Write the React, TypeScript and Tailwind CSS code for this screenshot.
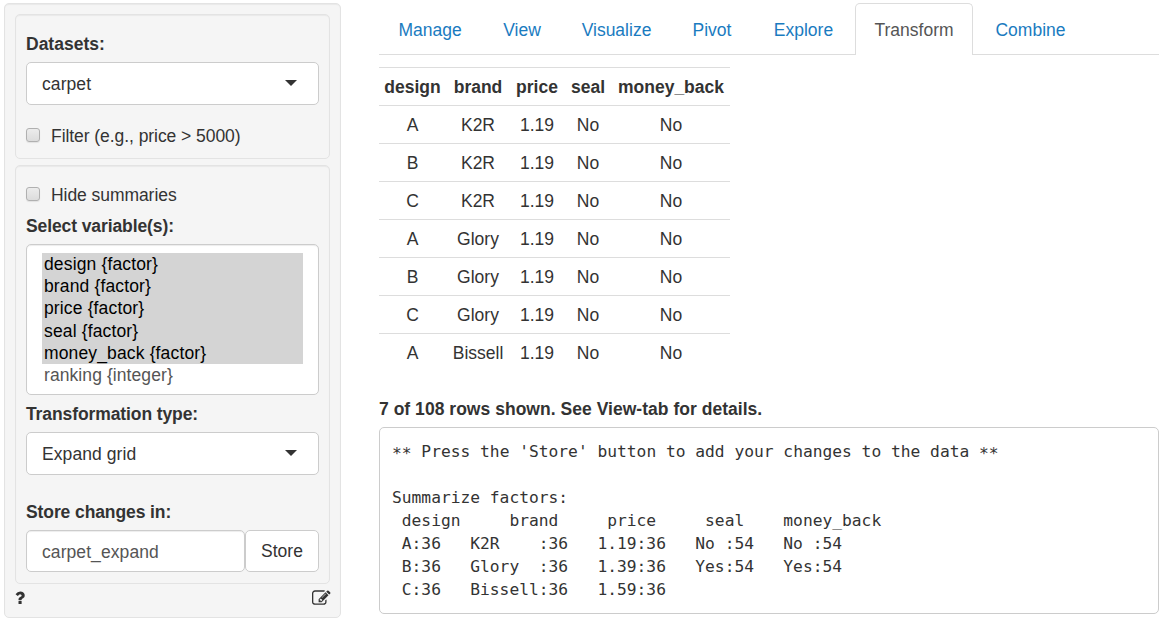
const tabs = [
  { label: 'Manage', box: 'w-[102px]' },
  { label: 'View', box: 'w-[82px]' },
  { label: 'Visualize', box: 'w-[107px]' },
  { label: 'Pivot', box: 'w-[84px]' },
  { label: 'Explore', box: 'w-[101px] pr-[2px]' },
  { label: 'Transform', box: 'w-[118px]', active: true },
  { label: 'Combine', box: 'w-[115px]' },
];

const columns = [
  { label: 'design', box: 'w-[67px]' },
  { label: 'brand', box: 'w-[64px]' },
  { label: 'price', box: 'w-[54px]' },
  { label: 'seal', box: 'w-[48px]' },
  { label: 'money_back', box: 'w-[118px]' },
];

const rows = [
  ['A', 'K2R', '1.19', 'No', 'No'],
  ['B', 'K2R', '1.19', 'No', 'No'],
  ['C', 'K2R', '1.19', 'No', 'No'],
  ['A', 'Glory', '1.19', 'No', 'No'],
  ['B', 'Glory', '1.19', 'No', 'No'],
  ['C', 'Glory', '1.19', 'No', 'No'],
  ['A', 'Bissell', '1.19', 'No', 'No'],
];

const variables = [
  'design {factor}',
  'brand {factor}',
  'price {factor}',
  'seal {factor}',
  'money_back {factor}',
];

const summary = `

Summarize factors:
 design     brand     price     seal    money_back
 A:36   K2R    :36   1.19:36   No :54   No :54
 B:36   Glory  :36   1.39:36   Yes:54   Yes:54
 C:36   Bissell:36   1.59:36                  `;

function QuestionIcon() {
  return (
    <svg viewBox="0 0 1792 1792" className="-ml-[4px] size-[17.5px]" fill="currentColor">
      <path d="M1088 1256v240q0 16-12 28t-28 12h-240q-16 0-28-12t-12-28v-240q0-16 12-28t28-12h240q16 0 28 12t12 28zm316-600q0 54-15.5 101t-35 76.5-55 59.5-57.5 43.5-61 35.5q-41 23-68.5 65t-27.5 67q0 17-12 32.5t-28 15.5h-240q-15 0-25.5-18.5t-10.5-37.5v-45q0-83 65-156.5t143-108.5q59-27 84-56t25-76q0-42-46.5-74t-107.5-32q-65 0-108 29-35 25-107 115-13 16-31 16-12 0-25-8l-164-125q-13-10-15.5-25t5.5-28q160-266 464-266 80 0 161 31t146 83 106 127.5 41 158.5z" />
    </svg>
  );
}

function EditIcon() {
  return (
    <svg viewBox="0 0 1792 1792" className="-mr-[0.5px] size-[18.5px]" fill="currentColor">
      <path d="M888 1184l116-116-152-152-116 116v56h96v96h56zm440-720q-16-16-33 1l-350 350q-17 17-1 33t33-1l350-350q17-17 1-33zm80 594v190q0 119-84.5 203.5t-203.5 84.5h-832q-119 0-203.5-84.5t-84.5-203.5v-832q0-119 84.5-203.5t203.5-84.5h832q63 0 117 25 15 7 18 23 3 17-9 29l-49 49q-14 14-32 8-23-6-45-6h-832q-66 0-113 47t-47 113v832q0 66 47 113t113 47h832q66 0 113-47t47-113v-126q0-13 9-22l64-64q15-15 35-7t20 29zm-96-738l288 288-672 672h-288v-288zm444 132l-92 92-288-288 92-92q28-28 68-28t68 28l152 152q28 28 28 68t-28 68z" />
    </svg>
  );
}

function Select({ value }: { value: string }) {
  return (
    <div className="flex h-[43px] items-center justify-between rounded-[5px] border border-[#ccc] bg-white pr-[21px] pl-[15px]">
      <span className="tracking-[0.08px]">{value}</span>
      <span className="-mt-[2px] border-x-[6px] border-t-[6px] border-x-transparent border-t-[#333]" />
    </div>
  );
}

function Check({ label }: { label: string }) {
  return (
    <div className="flex h-[24px] items-center">
      <span className="-mt-[3px] mr-[11px] size-[14px] rounded-[3px] border border-[#b0b0b0] bg-linear-to-b from-[#ececec] to-[#dcdcdc] shadow-[0_1px_1px_rgba(0,0,0,0.08)]" />
      <span className="tracking-[-0.06px]">{label}</span>
    </div>
  );
}

function Stars() {
  return <span className="inline-block translate-y-[2px]">**</span>;
}

const well = 'rounded-[5px] border border-[#e3e3e3] bg-[#f5f5f5] shadow-[inset_0_1px_1px_rgba(0,0,0,0.05)]';

export default function App() {
  return (
    <div className="flex h-[623px] w-[1165px] overflow-hidden bg-white pt-[3px] pl-[4px] font-['Liberation_Sans',Arial,sans-serif] text-[17.5px] leading-[24px] text-[#333]">
      <aside className={`h-[615px] w-[337px] shrink-0 px-[10px] pt-[10px] ${well}`}>
        <section className={`h-[145px] px-[10px] pt-[17px] ${well}`}>
          <div className="mb-[6px] h-[24px] font-bold">Datasets:</div>
          <Select value="carpet" />
          <div className="mt-[19px]">
            <Check label="Filter (e.g., price > 5000)" />
          </div>
        </section>
        <section className={`mt-[6px] h-[419px] px-[10px] pt-[17px] ${well}`}>
          <Check label="Hide summaries" />
          <div className="mt-[7px] h-[24px] font-bold tracking-[-0.1px]">Select variable(s):</div>
          <div className="mt-[6px] h-[151px] rounded-[5px] border border-[#ccc] bg-white px-[15px] pt-[8px] leading-[22.2px] shadow-[inset_0_1px_1px_rgba(0,0,0,0.075)]">
            <ul className="h-[111px] bg-[#d4d4d4] pl-[2px] tracking-[0.14px] text-black">
              {variables.map((v) => (
                <li key={v}>{v}</li>
              ))}
            </ul>
            <div className="pl-[2px] tracking-[0.08px] text-[#555]">ranking {'{integer}'}</div>
          </div>
          <div className="mt-[7px] mb-[6px] h-[24px] font-bold tracking-[-0.1px]">Transformation type:</div>
          <Select value="Expand grid" />
          <div className="mt-[25px] mb-[6px] h-[24px] font-bold tracking-[-0.1px]">Store changes in:</div>
          <div className="flex h-[42px]">
            <div className="flex w-[219px] items-center rounded-[5px] border border-[#ccc] bg-white pt-[2px] pl-[15px] tracking-[0.08px] text-[#555] shadow-[inset_0_1px_1px_rgba(0,0,0,0.075)]">
              carpet_expand
            </div>
            <button className="flex w-[74px] items-center justify-center rounded-[5px] border border-[#ccc] bg-white">
              Store
            </button>
          </div>
        </section>
        <footer className="mt-[5px] flex justify-between">
          <QuestionIcon />
          <EditIcon />
        </footer>
      </aside>
      <main className="ml-[38px] w-[780px]">
        <nav className="flex h-[52px] border-b border-[#ddd]">
          {tabs.map((t) => (
            <a
              key={t.label}
              className={
                t.active
                  ? `flex h-[52px] items-center justify-center rounded-t-[5px] border border-b-0 border-[#ddd] bg-white text-[#555] ${t.box}`
                  : `flex h-[52px] items-center justify-center pt-[2px] text-[#1a7bbf] ${t.box}`
              }
            >
              {t.label}
            </a>
          ))}
        </nav>
        <table className="mt-[12px] w-[351px] table-fixed border-separate border-spacing-0 text-center">
          <thead>
            <tr>
              {columns.map((c) => (
                <th key={c.label} className={`h-[38px] border-t border-[#ddd] p-0 font-bold ${c.box}`}>
                  {c.label}
                </th>
              ))}
            </tr>
          </thead>
          <tbody>
            {rows.map((row, i) => (
              <tr key={i}>
                {row.map((cell, j) => (
                  <td key={j} className="h-[38px] border-t border-[#ddd] p-0">
                    {cell}
                  </td>
                ))}
              </tr>
            ))}
          </tbody>
        </table>
        <p className="mt-[26px] h-[24px] font-bold tracking-[0.03px]">
          7 of 108 rows shown. See View-tab for details.
        </p>
        <pre className="mt-[6px] h-[187px] rounded-[5px] border border-[#ccc] bg-white px-[12px] pt-[12px] font-['DejaVu_Sans_Mono',monospace] text-[16.25px] leading-[23px]">
          <Stars />
          {" Press the 'Store' button to add your changes to the data "}
          <Stars />
          {summary}
        </pre>
      </main>
    </div>
  );
}
